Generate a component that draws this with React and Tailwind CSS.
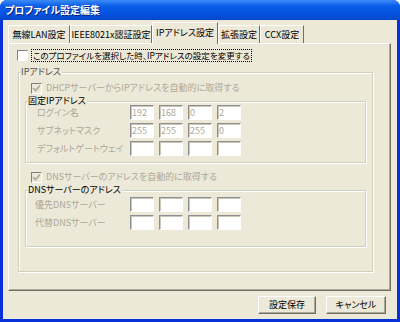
const font = { fontFamily: '"Noto Sans CJK JP", "Noto Sans", sans-serif' };

const Checkbox = ({ checked, disabled }) => (
  <span
    className={`flex h-[11px] w-[11px] shrink-0 items-center justify-center border border-t-[#808080] border-l-[#808080] border-b-white border-r-white ${
      disabled ? "bg-[#ECE9D8]" : "bg-white"
    }`}
  >
    {checked && (
      <svg width="9" height="9" viewBox="0 0 9 9">
        <path d="M1 4 L3.5 6.5 L8 1.5" fill="none" stroke={disabled ? "#ACA899" : "#21A121"} strokeWidth="1.6" />
      </svg>
    )}
  </span>
);

const Field = ({ value }) => (
  <div className="flex h-[15px] w-[24px] items-center border border-t-[#8E8E8E] border-l-[#8E8E8E] border-b-white border-r-white bg-white pl-[1px] text-[9px] leading-none text-[#ACA899] shadow-[inset_1px_1px_0_#C9C7BA]">
    {value}
  </div>
);

const FieldRow = ({ label, values, labelPad }) => (
  <div className="flex h-[15px] items-center">
    <span className={`w-[104px] ${labelPad} whitespace-nowrap text-[#ACA899]`}>{label}</span>
    <div className="flex gap-[5px]">
      {values.map((v, i) => (
        <Field key={i} value={v} />
      ))}
    </div>
  </div>
);

const Group = ({ label, labelClass, className, children }) => (
  <div className={`relative border border-[#D0D0BF] shadow-[1px_1px_0_#fff,inset_1px_1px_0_#fff] ${className}`}>
    <span className={`absolute -top-[7px] left-[2px] whitespace-nowrap bg-[#ECE9D8] pr-[1px] leading-[12px] ${labelClass}`}>
      {label}
    </span>
    {children}
  </div>
);

const tabs = [
  { label: "無線LAN設定", w: "w-[62px]" },
  { label: "IEEE8021x認証設定", w: "w-[82px]" },
  { label: "IPアドレス設定", w: "w-[66px]", active: true },
  { label: "拡張設定", w: "w-[42px]" },
  { label: "CCX設定", w: "w-[44px]" },
];

const App = () => {
  return (
    <div
      className="flex h-[322px] w-[400px] flex-col overflow-hidden rounded-t-[7px] bg-[#0831D9] text-[9px] leading-[12px] text-black [font-feature-settings:'palt']"
      style={font}
    >
      <div className="flex h-[20px] items-center bg-[linear-gradient(#3C8CF8,#0A5DE8_30%,#0553E0_70%,#0447C8)] pl-[5px] text-[10px] font-bold text-white [text-shadow:1px_1px_0_#0A1E7A]">
        プロファイル設定編集
      </div>
      <div className="mx-[3px] mb-[3px] flex flex-1 flex-col bg-[#ECE9D8] pl-[5px] pr-[6px] pt-[2px]">
        <div className="flex h-[21px] items-end">
          {tabs.map((t) =>
            t.active ? (
              <div
                key={t.label}
                className={`relative z-10 -mb-[1px] flex h-[22px] ${t.w} items-center justify-center whitespace-nowrap border-l border-t border-r border-l-white border-t-white border-r-[#716F64] bg-[#ECE9D8] pb-[2px]`}
              >
                {t.label}
              </div>
            ) : (
              <div
                key={t.label}
                className={`flex h-[18px] ${t.w} items-center justify-center whitespace-nowrap border-l border-t border-r border-l-white border-t-white border-r-[#716F64] pt-[1px]`}
              >
                {t.label}
              </div>
            )
          )}
        </div>
        <div className="flex h-[248px] flex-col border border-l-white border-t-white border-r-[#716F64] border-b-[#716F64] px-[8px] pt-[4px] shadow-[inset_-1px_-1px_0_#ACA899]">
          <div className="flex h-[14px] items-center gap-[3px]">
            <Checkbox />
            <span className="whitespace-nowrap border border-dotted border-black px-[1px] text-[8.5px] leading-[11px]">
              このプロファイルを選択した時、IPアドレスの設定を変更する
            </span>
          </div>
          <Group label="IPアドレス" labelClass="text-[#505050]" className="ml-[1px] mr-[9px] mt-[10px] pb-[24px] pl-[6px] pr-[6px] pt-[8px]">
            <div className="flex h-[14px] items-center gap-[4px] whitespace-nowrap pl-[6px] text-[#ACA899]">
              <Checkbox checked disabled />
              <span>DHCPサーバーからIPアドレスを自動的に取得する</span>
            </div>
            <Group label="固定IPアドレス" className="mt-[6px] flex flex-col gap-[3px] pb-[6px] pt-[3px]">
              <FieldRow label="ログイン名" labelPad="pl-[11px]" values={["192", "168", "0", "2"]} />
              <FieldRow label="サブネットマスク" labelPad="pl-[11px]" values={["255", "255", "255", "0"]} />
              <FieldRow label="デフォルトゲートウェイ" labelPad="pl-[11px]" values={["", "", "", ""]} />
            </Group>
            <div className="mt-[7px] flex h-[14px] items-center gap-[4px] whitespace-nowrap pl-[6px] text-[#ACA899]">
              <Checkbox checked disabled />
              <span>DNSサーバーのアドレスを自動的に取得する</span>
            </div>
            <Group label="DNSサーバーのアドレス" className="mt-[6px] flex flex-col gap-[3px] pb-[16px] pt-[6px]">
              <FieldRow label="優先DNSサーバー" labelPad="pl-[9px]" values={["", "", "", ""]} />
              <FieldRow label="代替DNSサーバー" labelPad="pl-[9px]" values={["", "", "", ""]} />
            </Group>
          </Group>
        </div>
        <div className="mt-[5px] flex justify-end gap-[10px] pr-[5px]">
          <button className="h-[18px] w-[58px] border border-l-white border-t-white border-r-[#716F64] border-b-[#716F64] bg-[#ECE9D8] text-[9px] shadow-[inset_-1px_-1px_0_#ACA899]">
            設定保存
          </button>
          <button className="h-[18px] w-[60px] border border-l-white border-t-white border-r-[#716F64] border-b-[#716F64] bg-[#ECE9D8] text-[9px] shadow-[inset_-1px_-1px_0_#ACA899]">
            キャンセル
          </button>
        </div>
      </div>
    </div>
  );
};

export default App;
